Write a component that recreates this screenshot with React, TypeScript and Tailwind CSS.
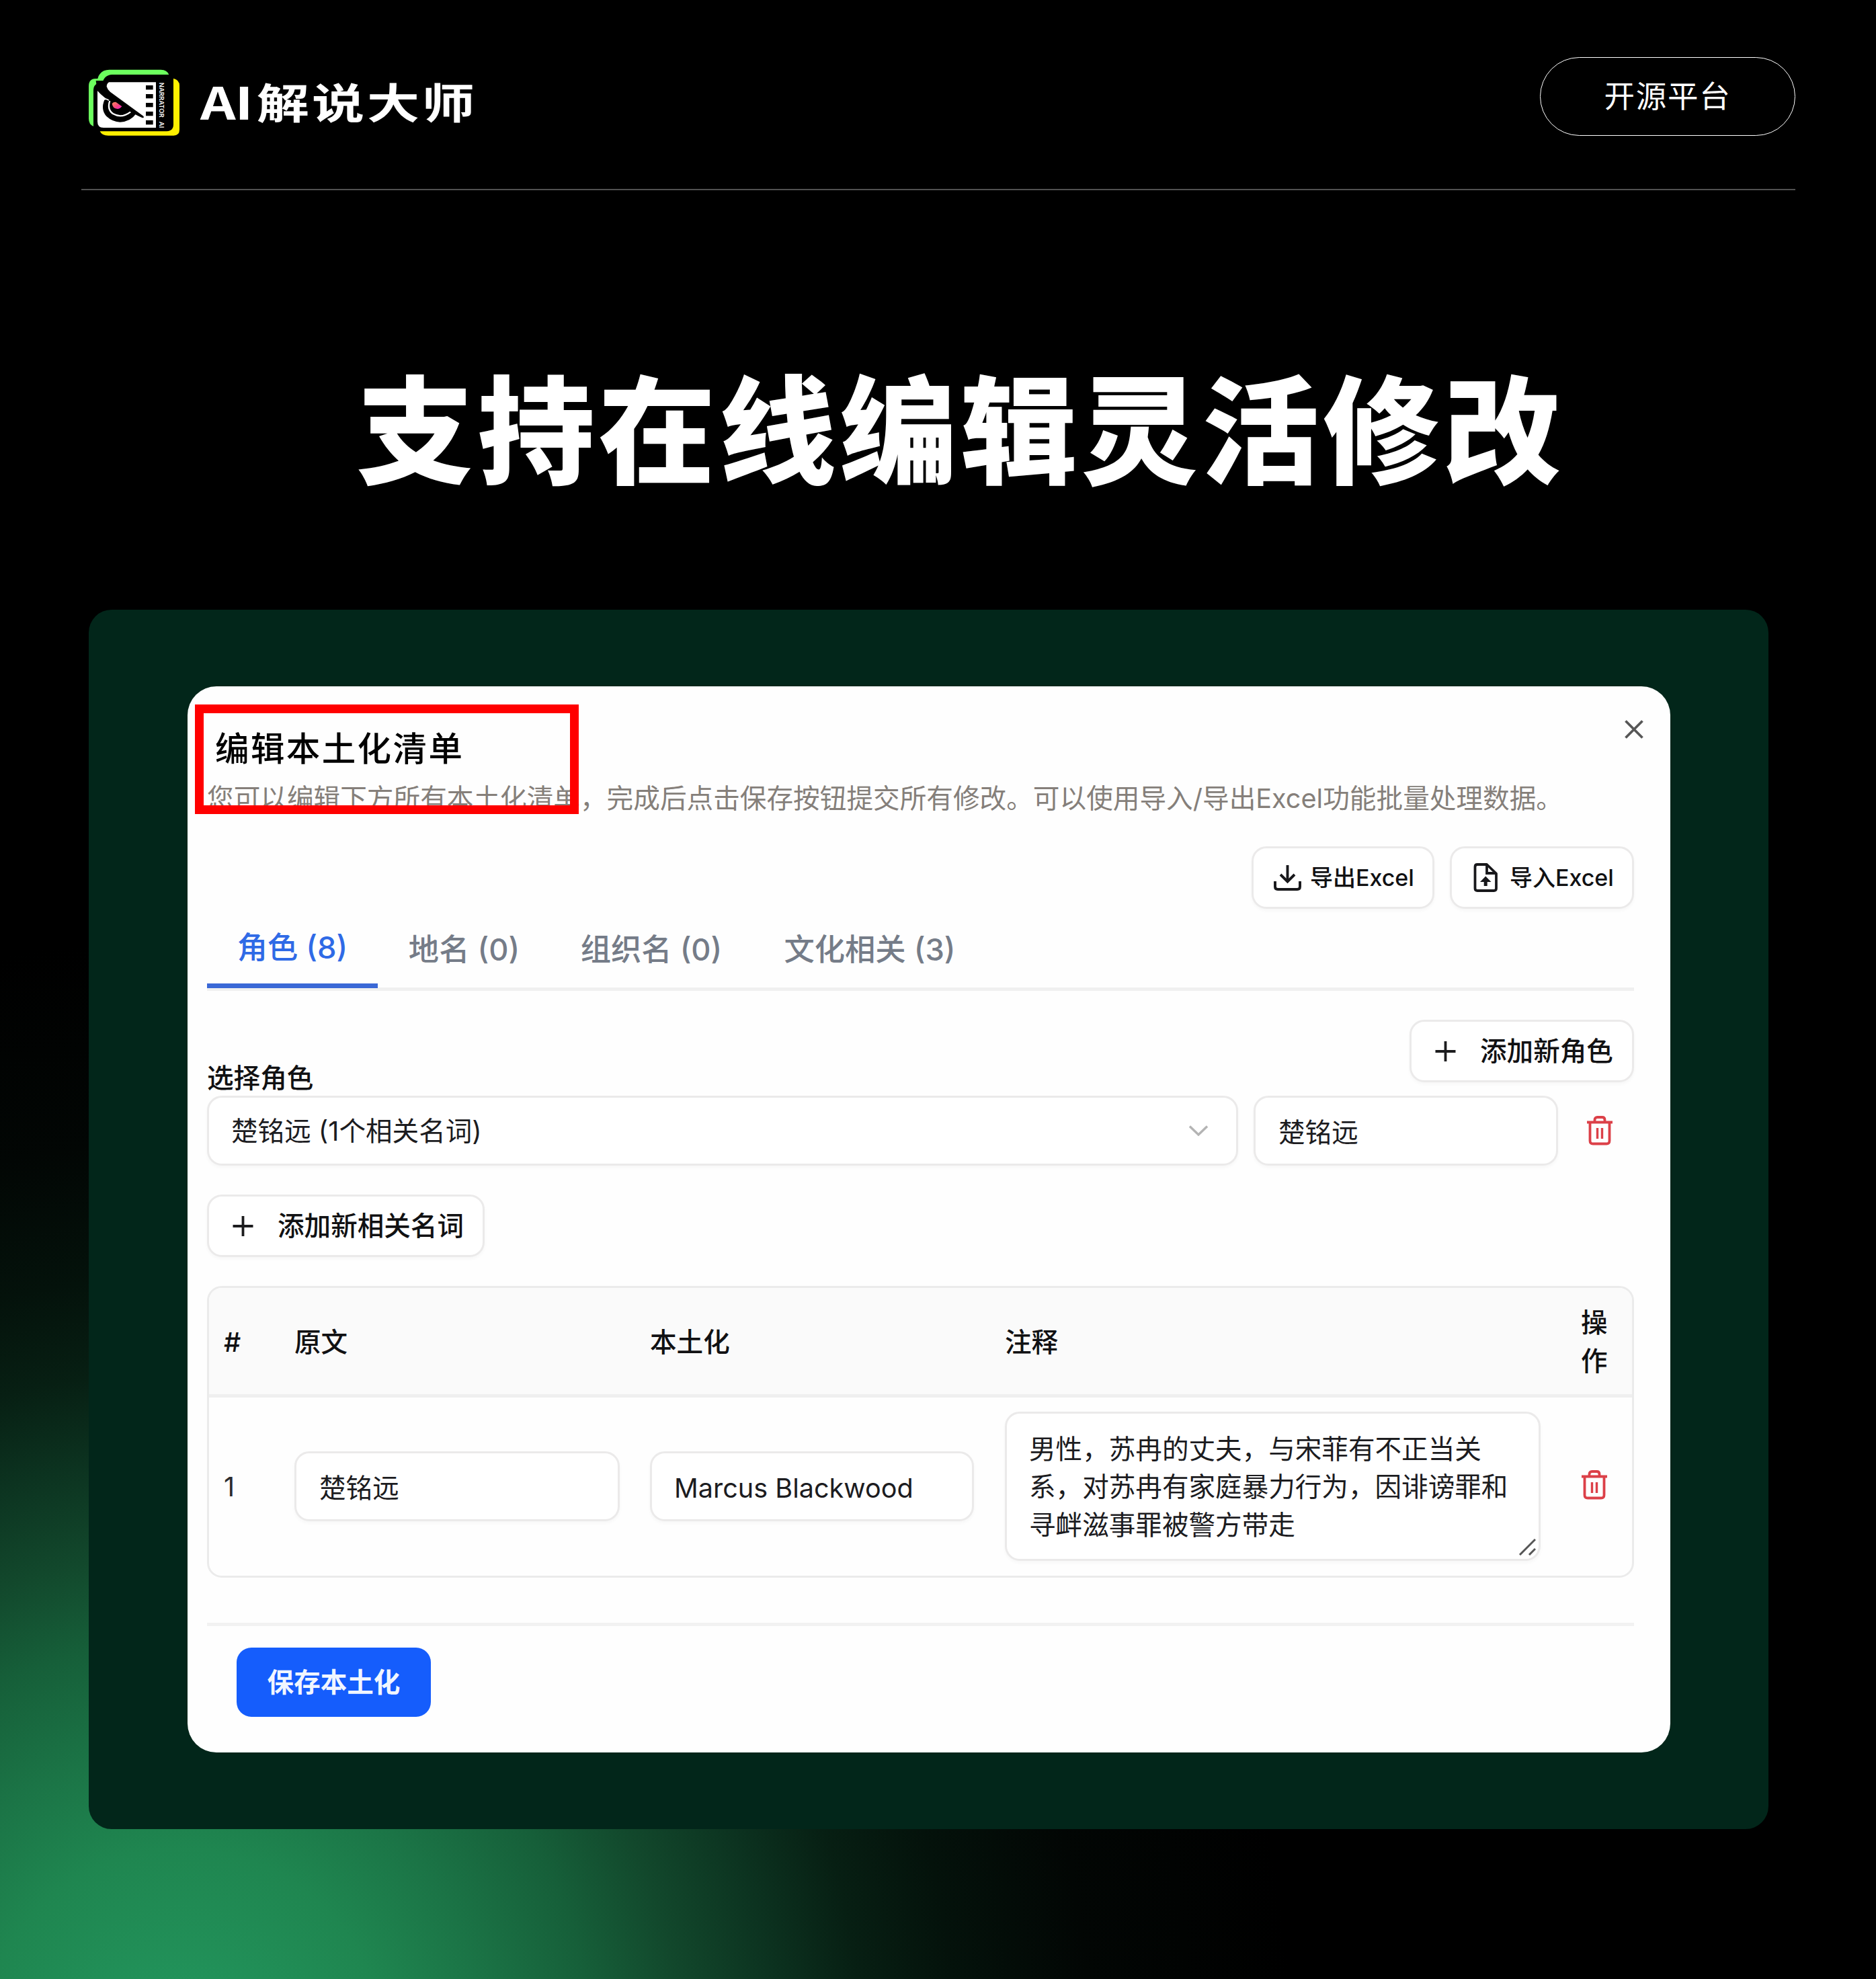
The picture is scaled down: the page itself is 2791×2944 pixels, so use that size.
import React from "react";

function Logo() {
  return (
    <svg className="h-[110px] w-[150px] shrink-0" viewBox="0 0 450 330">
      <defs>
        <linearGradient id="pupil" x1="0" y1="0" x2="1" y2="1">
          <stop offset="0" stopColor="#ff8a5c" />
          <stop offset="0.55" stopColor="#f5437f" />
          <stop offset="1" stopColor="#f01ad0" />
        </linearGradient>
      </defs>
      <path
        d="M18 92 Q18 57 48 57 H58 Q60 45 68 36 Q82 17 110 17 H340 Q368 18 376 39 H122 Q88 40 79 76 Q40 74 39 108 V270 Q18 262 18 235 Z"
        fill="#6cff5e"
      />
      <path
        d="M396 56 Q423 62 423 88 V285 Q423 311 397 311 H105 Q76 311 68 292 H366 Q396 291 396 262 Z"
        fill="#fff000"
      />
      <path d="M57 73 H318 V276 H84 Q57 276 57 248 Z" fill="#fff" />
      <path d="M88 152 Q70 195 98 226 Q125 251 158 251 Q205 249 229 214 L150 160 L105 148 Z" fill="#000" />
      <path d="M112 156 Q99 195 127 214 Q165 236 205 205" fill="none" stroke="#fff" strokeWidth="7" />
      <path
        d="M50 66 H120 Q98 74 98 92 Q101 104 114 116 L262 224 Q267 233 257 232 L236 222 L124 162 Q88 146 56 110 Z"
        fill="#000"
      />
      <path d="M96 148 L108 154" stroke="#fff" strokeWidth="5" />
      <path d="M122 168 Q130 160 140 162 L166 181 Q158 192 146 192 Q124 190 122 168 Z" fill="url(#pupil)" />
      {[87, 126, 165, 204, 243].map((y) => (
        <rect key={y} x="273" y={y} width="32" height="19" fill="#000" />
      ))}
      <text
        transform="translate(334 74) rotate(90)"
        fill="#fff"
        fontFamily="Inter, sans-serif"
        fontWeight="600"
        fontSize="26"
        textLength="203"
        wordSpacing="10"
        lengthAdjust="spacingAndGlyphs"
      >
        NARRATOR AI
      </text>
    </svg>
  );
}

function DownloadIcon() {
  return (
    <svg className="h-[45px] w-[45px] shrink-0" viewBox="0 0 45 45" fill="none" stroke="#18181b" strokeWidth="3.9">
      <path d="M22.5 4 V28" />
      <path d="M12 18 L22.5 28.5 L33 18" />
      <path d="M4 28 V36 Q4 40 8 40 H37 Q41 40 41 36 V28" />
    </svg>
  );
}

function UploadFileIcon() {
  return (
    <svg className="h-[45px] w-[45px] shrink-0" viewBox="0 0 45 45" fill="none" stroke="#18181b" strokeWidth="3.8">
      <path d="M24 3 H10 Q6.500 3 6.500 6.500 V38.500 Q6.500 42 10 42 H34.500 Q38 42 38 38.500 V16.500 Z" strokeLinejoin="round" />
      <path d="M24 3 V16 H37.500" />
      <path d="M22.200 35 V26" strokeWidth="5" />
      <path d="M14 29 L22.200 20.500 L30.500 29 Z" fill="#18181b" stroke="none" />
    </svg>
  );
}

function PlusIcon() {
  return (
    <svg className="h-[32px] w-[32px] shrink-0" viewBox="0 0 32 32" fill="none" stroke="#1c1c1e" strokeWidth="3.800">
      <path d="M16.500 0 V30 M1.500 15 H31.500" />
    </svg>
  );
}

function TrashIcon() {
  return (
    <svg className="h-[46px] w-[40px] shrink-0" viewBox="0 0 40 46" fill="none" stroke="#dc4048" strokeWidth="3.800">
      <path d="M1 10.500 H39" />
      <path d="M12.500 10.500 V7 Q12.500 3 16.500 3 H23.500 Q27.500 3 27.500 7 V10.500" />
      <path d="M5.500 10.500 V38 Q5.500 42.500 10 42.500 H30 Q34.500 42.500 34.500 38 V10.500" />
      <path d="M16.500 19 V35 M23.500 19 V35" strokeWidth="3.400" />
    </svg>
  );
}

function OutlineButton({ className, children }: { className: string; children: React.ReactNode }) {
  return (
    <button
      className={`flex h-[93px] items-center rounded-[22px] border-[3px] border-[#ebeaea] bg-white font-medium leading-none text-[#111113] shadow-[0_3px_5px_rgba(0,0,0,0.03)] ${className}`}
    >
      {children}
    </button>
  );
}

function Field({ className, children }: { className: string; children: React.ReactNode }) {
  return (
    <div
      className={`flex h-[104px] items-center rounded-[22px] border-[3px] border-[#ebeaea] bg-white text-[39.6px] leading-none text-[#1c1c1f] shadow-[0_3px_5px_rgba(0,0,0,0.03)] ${className}`}
    >
      {children}
    </div>
  );
}

const tabs = [
  { label: "角色 (8)", active: true, box: "w-[254px]" },
  { label: "地名 (0)", active: false, box: "w-[257px]" },
  { label: "组织名 (0)", active: false, box: "w-[300px]" },
  { label: "文化相关 (3)", active: false, box: "w-[350px]" },
];

const columns = "grid grid-cols-[127px_529px_528px_857px_1fr] items-center";

export default function App() {
  return (
    <div className="h-[2944px] w-[2791px] overflow-hidden bg-black bg-[radial-gradient(circle_at_270px_3050px,#23985f_0px,#1f8650_300px,#1b7446_450px,#165f39_610px,#12482c_740px,#0c3320_880px,#071f13_1010px,#04120b_1150px,#020604_1350px,#000000_1650px)] font-[Inter,'Noto_Sans_CJK_SC',sans-serif]">
      <header className="ml-[121px] flex h-[283px] w-[2550px] justify-between border-b-2 border-[#505050]">
        <div className="flex pl-[5px] pt-[98px]">
          <Logo />
          <div className="ml-[22px] mt-[17px] flex h-[70px] origin-center scale-y-[0.8] items-center font-['Noto_Sans_CJK_SC',sans-serif] text-[78px] font-bold leading-none text-white">
            <span className="w-[84px] whitespace-nowrap text-[82px] tracking-[-1px]">AI</span>
            <span className="tracking-[4px]">解说大师</span>
          </div>
        </div>
        <div className="mt-[85px] flex h-[117px] w-[380px] items-center justify-center rounded-full border border-white pb-[5px] font-['Noto_Sans_CJK_SC',sans-serif] text-[45.500px] leading-none tracking-[1.800px] text-white">
          开源平台
        </div>
      </header>

      <h1 className="ml-[531px] mt-[247px] h-[200px] whitespace-nowrap font-['Noto_Sans_CJK_SC',sans-serif] text-[174px] font-black leading-[200px] tracking-[5.600px] text-white">
        支持在线编辑灵活修改
      </h1>

      <main className="ml-[132px] mt-[177px] h-[1814px] w-[2499px] rounded-[34px] bg-[#02261a] pl-[147px] pt-[114px]">
        <section className="relative flex h-[1586px] w-[2206px] flex-col rounded-[43px] bg-[#fefefe] pl-[29px] pr-[54px]">
          <div className="flex h-[129px] items-start justify-between">
            <h2 className="ml-[12px] mt-[64px] font-['Noto_Sans_CJK_SC',sans-serif] text-[50.500px] font-medium leading-none tracking-[2.400px] text-black">
              编辑本土化清单
            </h2>
            <svg className="mr-[-14px] mt-[50px] h-[28px] w-[28px]" viewBox="0 0 28 28" fill="none" stroke="#575757" strokeWidth="3.800">
              <path d="M1.500 1.500 L26.500 26.500 M26.500 1.500 L1.500 26.500" />
            </svg>
          </div>
          <p className="mt-[18px] h-[40px] whitespace-nowrap text-[39.650px] leading-[40px] text-[#857f7a]">
            您可以编辑下方所有本土化清单，完成后点击保存按钮提交所有修改。可以使用导入/导出Excel功能批量处理数据。
          </p>

          <div className="mt-[51px] flex justify-end gap-[23px] text-[34px]">
            <OutlineButton className="w-[272px] pl-[28px]">
              <DownloadIcon />
              <span className="ml-[11px] whitespace-nowrap">导出Excel</span>
            </OutlineButton>
            <OutlineButton className="w-[274px] pl-[28px]">
              <UploadFileIcon />
              <span className="ml-[13px] whitespace-nowrap">导入Excel</span>
            </OutlineButton>
          </div>

          <nav className="flex h-[122px] border-b-[5px] border-[#f0f0f0] text-[45.300px] font-medium leading-none">
            {tabs.map((tab) => (
              <div
                key={tab.label}
                className={
                  tab.active
                    ? `mb-[-1px] flex justify-center border-b-[7px] border-[#3a68d6] pt-[35px] text-[#2f6ae6] ${tab.box}`
                    : `flex justify-center whitespace-nowrap pt-[38px] text-[#757c88] ${tab.box}`
                }
              >
                {tab.label}
              </div>
            ))}
          </nav>

          <div className="mt-[43px] flex justify-end">
            <OutlineButton className="w-[334px] pl-[34px] pt-[2px] text-[39.600px]">
              <PlusIcon />
              <span className="ml-[36px] whitespace-nowrap">添加新角色</span>
            </OutlineButton>
          </div>
          <div className="mt-[-26px] h-[40px] text-[39.600px] font-medium leading-[40px] text-[#111113]">选择角色</div>
          <div className="mt-[6px] flex items-center">
            <Field className="w-[1534px] justify-between pl-[33px] pr-[42px] pt-[3px]">
              <span>楚铭远 (1个相关名词)</span>
              <svg className="mb-[3px] h-[16px] w-[28px]" viewBox="0 0 28 16" fill="none" stroke="#b4b4b4" strokeWidth="3.400">
                <path d="M1 1.500 L14 14 L27 1.500" />
              </svg>
            </Field>
            <Field className="ml-[23px] w-[453px] pl-[34px] pt-[8px]">楚铭远</Field>
            <span className="ml-[42px]">
              <TrashIcon />
            </span>
          </div>

          <OutlineButton className="mt-[43px] w-[413px] pl-[34px] pt-[2px] text-[39.600px]">
            <PlusIcon />
            <span className="ml-[36px] whitespace-nowrap">添加新相关名词</span>
          </OutlineButton>

          <div className="mt-[43px] h-[434px] w-[2123px] overflow-hidden rounded-[22px] border-[3px] border-[#ebebeb] text-[39.600px] text-[#111113]">
            <div className={`h-[163px] border-b-[5px] border-[#efefef] bg-[#fafafa] pt-[4px] font-medium leading-[56.700px] ${columns}`}>
              <span className="pl-[22px]">#</span>
              <span>原文</span>
              <span>本土化</span>
              <span>注释</span>
              <span className="w-[40px]">操作</span>
            </div>
            <div className={`h-[263px] ${columns}`}>
              <span className="pl-[22px] pt-[4px] text-[#2b2b2e]">1</span>
              <Field className="w-[484px] pl-[34px] pt-[8px]">楚铭远</Field>
              <Field className="w-[482px] pl-[33px] pt-[8px]">Marcus Blackwood</Field>
              <div className="relative h-[222px] w-[797px] rounded-[22px] border-[3px] border-[#ebeaea] bg-white pl-[33px] pt-[25px] leading-[56.700px] text-[#1c1c1f] shadow-[0_3px_5px_rgba(0,0,0,0.03)]">
                男性，苏冉的丈夫，与宋菲有不正当关
                <br />
                系，对苏冉有家庭暴力行为，因诽谤罪和
                <br />
                寻衅滋事罪被警方带走
                <svg className="absolute bottom-[5px] right-[4px] h-[26px] w-[26px]" viewBox="0 0 26 26" fill="none" stroke="#555" strokeWidth="3">
                  <path d="M2 25 L25 2 M16 25 L25 16" />
                </svg>
              </div>
              <span className="pb-[4px]">
                <TrashIcon />
              </span>
            </div>
          </div>

          <div className="mt-[67px] h-[5px] w-[2123px] shrink-0 bg-[#f2f2f2]" />
          <button className="ml-[44px] mt-[32px] flex h-[103px] w-[289px] items-center justify-center rounded-[22px] bg-[#155dfc] pt-[3px] text-[39.600px] font-semibold leading-none text-[#f1f6ff]">
            保存本土化
          </button>

          <div className="absolute left-[11px] top-[27px] h-[163px] w-[571px] border-[13px] border-[#ff0000]" />
        </section>
      </main>
    </div>
  );
}
